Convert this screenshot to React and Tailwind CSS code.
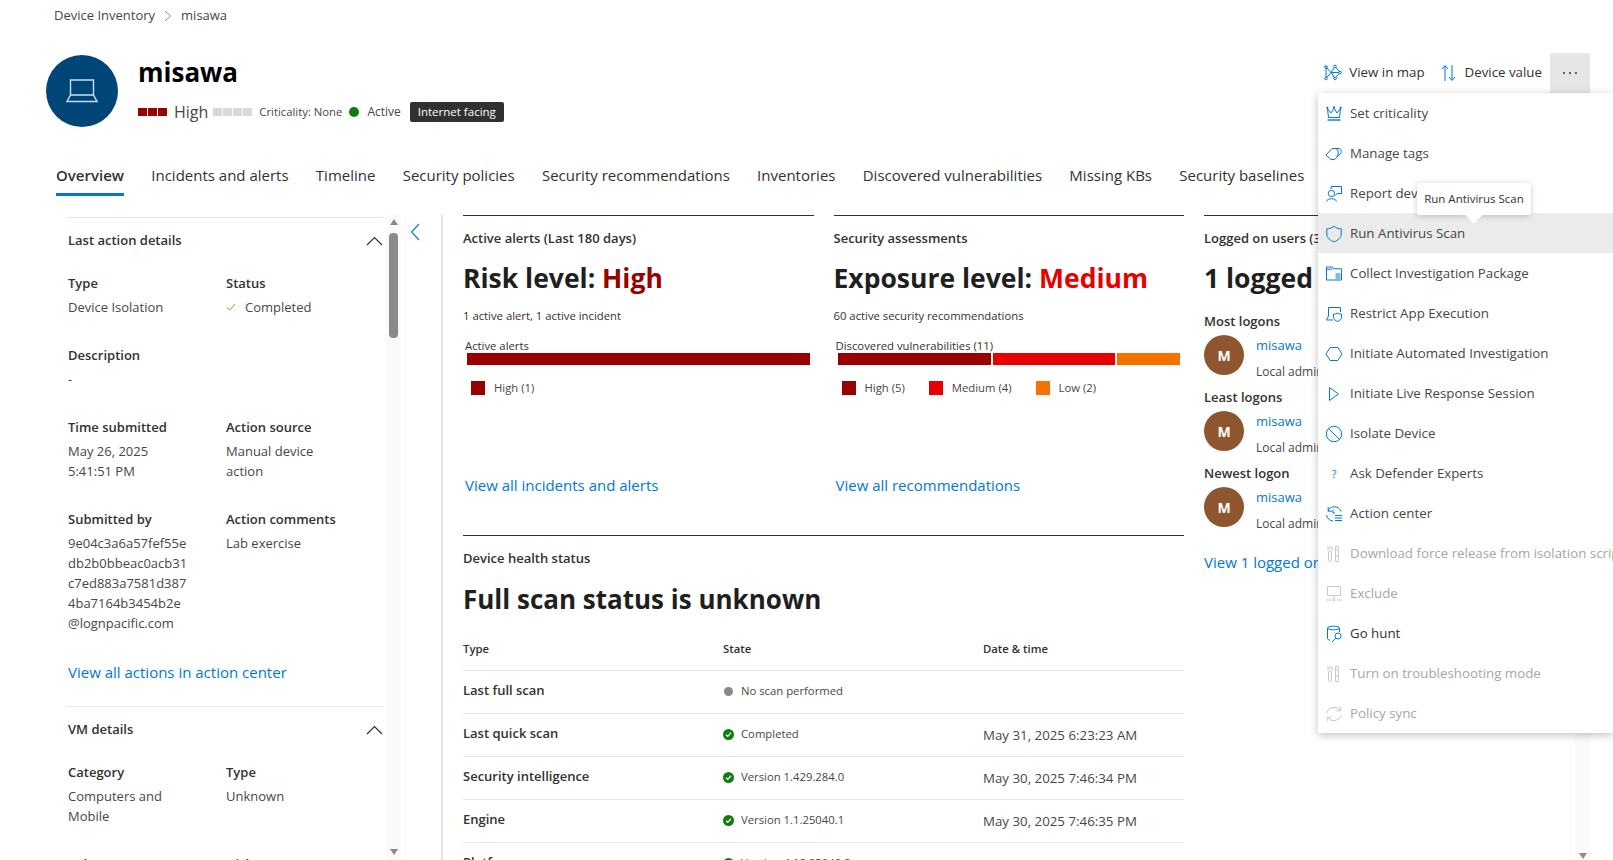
import React from "react";

const font = "font-['Open_Sans',sans-serif]";

// Icons are drawn by hand, they come from the Fluent set and lucide has no match
const Icon = ({ children, className = "text-[#0078d4]", size = 18 }) => (
  <svg
    width={size}
    height={size}
    viewBox="0 0 18 18"
    fill="none"
    stroke="currentColor"
    strokeWidth="1"
    className={`shrink-0 ${className}`}
  >
    {children}
  </svg>
);

const icons = {
  crown: (
    <>
      <path d="M2.5 3.5 L3.5 12.5 H14.5 L15.5 3.5 L12 8 L9 3 L6 8 Z" />
      <path d="M2.5 15 H15.5" strokeWidth="1.4" />
      <circle cx="2.3" cy="2.8" r="1.1" fill="currentColor" stroke="none" />
      <circle cx="9" cy="2.3" r="1.1" fill="currentColor" stroke="none" />
      <circle cx="15.7" cy="2.8" r="1.1" fill="currentColor" stroke="none" />
    </>
  ),
  tag: (
    <>
      <path d="M1 10 L7 3.5 H14 C16.5 3.5 17 7 15 9 L9.5 14.5 H6 Z" />
      <path d="M11 3.5 C13.5 5 14 8.5 12 11.5" />
    </>
  ),
  report: (
    <>
      <circle cx="6.5" cy="8.5" r="3.2" />
      <path d="M1.5 16.5 C2 12.8 11 12.8 11.5 16.5" />
      <path d="M6 4 V1.5 H16.5 V8.5 H12 L10.5 10.5" />
    </>
  ),
  shield: <path d="M9 1.2 C11 3 13.5 3.8 16.2 3.8 V9 C16.2 12.8 12.5 15.6 9 16.9 C5.5 15.6 1.8 12.8 1.8 9 V3.8 C4.5 3.8 7 3 9 1.2 Z" />,
  folder: (
    <>
      <path d="M1.5 15 V2 H7 L8.5 3.8 H16.5 V15 Z" />
      <path d="M1.5 4.2 H7" />
      <path d="M10.5 9 H15.5 M10.5 11 H15.5 M10.5 13 H15.5" />
    </>
  ),
  restrict: (
    <>
      <path d="M3.5 11 V2.5 H15.5 V7" />
      <path d="M3.5 11 L1.5 15 H8" />
      <path d="M12.5 8 C13.5 8.8 15 9.2 16.5 9.2 V12 C16.5 14.2 14.5 15.7 12.5 16.5 C10.5 15.7 8.5 14.2 8.5 12 V9.2 C10 9.2 11.5 8.8 12.5 8 Z" />
    </>
  ),
  hexagon: <path d="M5.2 2.5 H12.8 L17 9 L12.8 15.5 H5.2 L1 9 Z" />,
  play: <path d="M4.5 2.5 L13.5 9 L4.5 15.5 Z" />,
  block: (
    <>
      <circle cx="9" cy="9" r="7.7" />
      <path d="M3.6 3.6 L14.4 14.4" />
    </>
  ),
  question: null,
  center: (
    <>
      <path d="M3 6 A7 7 0 0 1 16 6.5" />
      <path d="M3.2 2 V6.2 H7" />
      <path d="M1.5 10 A7.5 7.5 0 0 0 8 16" />
      <path d="M8 8 V5 M8 8 H10" />
      <path d="M10 10.5 H17 M10 13 H17 M10 15.5 H17" />
    </>
  ),
  tools: (
    <>
      <path d="M3 1.5 V5 C3 6 4 6.5 5 6.5 C6 6.5 7 6 7 5 V1.5 M5 1.5 V4 M3.5 7 V15.5 C3.5 16.8 6.5 16.8 6.5 15.5 V7" />
      <path d="M10.5 1.5 H13.5 V16.5 H10.5 Z M10.5 5 H13.5 M10.5 11 H13.5" />
    </>
  ),
  exclude: (
    <>
      <path d="M2.5 1.5 H15.5 V10.5 H2.5 Z" />
      <path d="M1 15 H6.5 M11.5 15 H17" />
      <path d="M7.5 13 L10.5 16.5 M10.5 13 L7.5 16.5" />
      <path d="M9 10.5 V13" />
    </>
  ),
  hunt: (
    <>
      <ellipse cx="8.5" cy="3" rx="6" ry="1.8" />
      <path d="M2.5 3 V13.5 C2.5 14.5 4 15 5 15.2 M14.5 3 V7" />
      <circle cx="13" cy="11" r="3" />
      <path d="M10.8 13.2 L7 17" />
    </>
  ),
  sync: (
    <>
      <path d="M1.5 8 A8 8 0 0 1 15.5 5.5" />
      <path d="M16.5 10 A8 8 0 0 1 2.5 12.5" />
      <path d="M15.8 1.5 V5.8 H11.5" />
      <path d="M2.2 16.5 V12.2 H6.5" />
    </>
  ),
};

const menuItems = [
  { label: "Set criticality", icon: "crown" },
  { label: "Manage tags", icon: "tag" },
  { label: "Report device inaccuracy", icon: "report" },
  { label: "Run Antivirus Scan", icon: "shield", active: true },
  { label: "Collect Investigation Package", icon: "folder" },
  { label: "Restrict App Execution", icon: "restrict" },
  { label: "Initiate Automated Investigation", icon: "hexagon" },
  { label: "Initiate Live Response Session", icon: "play" },
  { label: "Isolate Device", icon: "block" },
  { label: "Ask Defender Experts", icon: "question" },
  { label: "Action center", icon: "center" },
  { label: "Download force release from isolation script", icon: "tools", disabled: true },
  { label: "Exclude", icon: "exclude", disabled: true },
  { label: "Go hunt", icon: "hunt", dark: true },
  { label: "Turn on troubleshooting mode", icon: "tools", disabled: true },
  { label: "Policy sync", icon: "sync", disabled: true },
];

const tabs = [
  "Overview",
  "Incidents and alerts",
  "Timeline",
  "Security policies",
  "Security recommendations",
  "Inventories",
  "Discovered vulnerabilities",
  "Missing KBs",
  "Security baselines",
];

const scans = [
  { type: "Last full scan", state: "No scan performed", date: "", ok: false },
  { type: "Last quick scan", state: "Completed", date: "May 31, 2025 6:23:23 AM", ok: true },
  { type: "Security intelligence", state: "Version 1.429.284.0", date: "May 30, 2025 7:46:34 PM", ok: true },
  { type: "Engine", state: "Version 1.1.25040.1", date: "May 30, 2025 7:46:35 PM", ok: true },
  { type: "Platform", state: "Version 4.18.25040.2", date: "May 31, 2025 6:24:45 PM", ok: true },
];

const Field = ({ label, children, className = "" }) => (
  <div className={className}>
    <div className="text-[13px] leading-5 font-semibold text-[#323130]">{label}</div>
    <div className="mt-1 text-[13px] leading-5 text-[#484644]">{children}</div>
  </div>
);

const ChevronUp = () => (
  <svg width="17" height="10" viewBox="0 0 17 10" fill="none" stroke="#323130" strokeWidth="1.2">
    <path d="M1 9 L8.5 1.5 L16 9" />
  </svg>
);

const Sidebar = () => (
  <div className="relative w-[334px] shrink-0 h-[645px] overflow-hidden">
    <div className="w-[316px] border-t border-[#e5e5e5] h-[2px] mt-[2px]" />
    <div className="w-[315px] ml-[1px]">
      <div className="flex items-center justify-between mt-[12px] h-5">
        <span className="text-[13px] font-semibold text-[#323130]">Last action details</span>
        <ChevronUp />
      </div>
      <div className="grid grid-cols-[158px_1fr] mt-[22px]">
        <Field label="Type">Device Isolation</Field>
        <Field label="Status">
          <span className="flex items-center gap-[9px]">
            <svg width="10" height="10" viewBox="0 0 10 10" fill="none" stroke="#6bb700" strokeWidth="1">
              <path d="M1 5.5 L3.8 8 L9 2" />
            </svg>
            Completed
          </span>
        </Field>
      </div>
      <Field label="Description" className="mt-[28px]">-</Field>
      <div className="grid grid-cols-[158px_1fr] mt-[28px]">
        <Field label="Time submitted">
          May 26, 2025
          <br />
          5:41:51 PM
        </Field>
        <Field label="Action source">
          Manual device
          <br />
          action
        </Field>
      </div>
      <div className="grid grid-cols-[158px_1fr] mt-[28px]">
        <Field label="Submitted by">
          9e04c3a6a57fef55e
          <br />
          db2b0bbeac0acb31
          <br />
          c7ed883a7581d387
          <br />
          4ba7164b3454b2e
          <br />
          @lognpacific.com
        </Field>
        <Field label="Action comments">Lab exercise</Field>
      </div>
      <a className="block mt-[29px] text-[15px] leading-5 text-[#0078d4]">View all actions in action center</a>
      <div className="border-t border-[#e5e5e5] -ml-[1px] mt-[24px]" />
      <div className="flex items-center justify-between mt-[13px] h-5">
        <span className="text-[13px] font-semibold text-[#323130]">VM details</span>
        <ChevronUp />
      </div>
      <div className="grid grid-cols-[158px_1fr] mt-[22px]">
        <Field label="Category">
          Computers and
          <br />
          Mobile
        </Field>
        <Field label="Type">Unknown</Field>
      </div>
      <div className="grid grid-cols-[158px_1fr] mt-[28px]">
        <Field label="Subtype">Unknown</Field>
        <Field label="Disks">Unknown</Field>
      </div>
    </div>
    {/* sidebar scrollbar */}
    <div className="absolute right-0 top-0 bottom-0 w-[15px] bg-[#fafafa] flex flex-col items-center">
      <div className="mt-[4px] border-x-[4.5px] border-x-transparent border-b-[6px] border-b-[#8a8a8a]" />
      <div className="mt-[8px] w-[9px] h-[105px] rounded-[4px] bg-[#8a8a8a]" />
      <div className="mt-auto mb-[5px] border-x-[4.5px] border-x-transparent border-t-[6px] border-t-[#8a8a8a]" />
    </div>
  </div>
);

const Swatch = ({ color, label }) => (
  <span className="flex items-center gap-[9px] text-[11.3px] text-[#484644]">
    <span className={`w-[14px] h-[14px] ${color}`} />
    {label}
  </span>
);

const CardHead = ({ label }) => (
  <div className="text-[13px] leading-5 font-semibold text-[#323130] mt-[12px]">{label}</div>
);

const Logon = ({ title }) => (
  <div>
    <div className="text-[13px] leading-5 font-semibold text-[#323130]">{title}</div>
    <div className="flex gap-[12px] mt-[4px] h-10 whitespace-nowrap">
      <div className="w-10 h-10 rounded-full bg-[#8e562e] text-white flex items-center justify-center text-[14px] font-bold shrink-0">
        M
      </div>
      <div>
        <div className="text-[13px] leading-5 text-[#0078d4]">misawa</div>
        <div className="text-[12px] leading-4 text-[#484644] mt-[9px]">Local admin</div>
      </div>
    </div>
  </div>
);

const StateDot = ({ ok }) =>
  ok ? (
    <svg width="11" height="11" viewBox="0 0 11 11" className="shrink-0">
      <circle cx="5.5" cy="5.5" r="5.5" fill="#107c10" />
      <path d="M3 5.7 L4.8 7.4 L8 3.8" fill="none" stroke="white" strokeWidth="1.3" />
    </svg>
  ) : (
    <span className="w-[9px] h-[9px] mx-[1px] rounded-full bg-[#8a8886] shrink-0" />
  );

export default function App() {
  return (
    <div className={`relative h-[860px] overflow-hidden bg-white ${font}`}>
      {/* Breadcrumb */}
      <div className="flex items-center h-[16px] pt-[8px] box-content ml-[54px] text-[13px] text-[#484644]">
        <span>Device Inventory</span>
        <svg width="8" height="12" viewBox="0 0 8 12" fill="none" stroke="#8a8886" className="mx-[9px]">
          <path d="M1 1 L6.5 6 L1 11" />
        </svg>
        <span>misawa</span>
      </div>

      {/* Device header */}
      <div className="flex justify-between mt-[29px] pr-[23px]">
        <div className="flex ml-[46px] mt-[2px]">
          <div className="w-[72px] h-[72px] rounded-full bg-[#004578] flex items-center justify-center">
            <svg width="34" height="26" viewBox="0 0 34 26" fill="none" stroke="#c7e0f4" strokeWidth="1.4">
              <path d="M5.5 17 V2 H28.5 V17" />
              <path d="M5.5 17 H28.5 L32 23.5 H2 Z" />
            </svg>
          </div>
          <div className="ml-[20px]">
            <div className="text-[26px] leading-9 font-bold text-black -mt-[1px]">misawa</div>
            <div className="flex items-center mt-[10px] h-[24px]">
              <span className="flex gap-[1px]">
                <i className="w-[9px] h-[8px] bg-[#990000]" />
                <i className="w-[9px] h-[8px] bg-[#990000]" />
                <i className="w-[9px] h-[8px] bg-[#990000]" />
              </span>
              <span className="ml-[7px] text-[16px] text-[#484644]">High</span>
              <span className="flex gap-[1px] ml-[5px]">
                <i className="w-[9px] h-[8px] bg-[#d9d9d9]" />
                <i className="w-[9px] h-[8px] bg-[#d9d9d9]" />
                <i className="w-[9px] h-[8px] bg-[#d9d9d9]" />
                <i className="w-[9px] h-[8px] bg-[#d9d9d9]" />
              </span>
              <span className="ml-[7px] text-[11.3px] text-[#484644]">Criticality: None</span>
              <span className="ml-[7px] w-[10px] h-[10px] rounded-full bg-[#107c10]" />
              <span className="ml-[8px] text-[12px] text-[#484644]">Active</span>
              <span className="ml-[9px] h-[20px] px-2 rounded-[2px] bg-[#323130] text-white text-[11.5px] leading-5">
                Internet facing
              </span>
            </div>
          </div>
        </div>
        <div className="flex items-center h-10 text-[13.3px] text-[#323130]">
          <svg width="18" height="18" viewBox="0 0 18 18" fill="none" stroke="#0078d4" className="mr-[7px]">
            <path d="M2 3 L7 8.5 L2 14.5 M7 8.5 L11 2.5 L16 8.5 L11 14.5 Z M7 8.5 H16 M2 3 V14.5" />
            <circle cx="2" cy="3" r="1.3" fill="white" />
            <circle cx="2" cy="14.5" r="1.3" fill="white" />
            <circle cx="11" cy="2.5" r="1.3" fill="white" />
            <circle cx="16" cy="8.5" r="1.3" fill="white" />
            <circle cx="11" cy="14.5" r="1.3" fill="white" />
          </svg>
          View in map
          <svg width="16" height="18" viewBox="0 0 16 18" fill="none" stroke="#0078d4" className="ml-[16px] mr-[8px]">
            <path d="M4 17 V2 M1 5 L4 1.5 L7 5" />
            <path d="M11 1 V16 M8 13 L11 16.5 L14 13" />
          </svg>
          Device value
          <div className="ml-[8px] w-10 h-10 bg-[#e6e6e6] flex items-center justify-center gap-[4px]">
            <i className="w-[2px] h-[2px] rounded-full bg-[#323130]" />
            <i className="w-[2px] h-[2px] rounded-full bg-[#323130]" />
            <i className="w-[2px] h-[2px] rounded-full bg-[#323130]" />
          </div>
        </div>
      </div>

      {/* Tabs */}
      <div className="flex gap-[27.25px] ml-[56px] mt-[37px] h-[32px] text-[15px] text-[#323130] whitespace-nowrap">
        {tabs.map((tab, i) => (
          <div key={tab} className={i === 0 ? "font-semibold border-b-[3px] border-[#0078d4]" : ""}>
            {tab}
          </div>
        ))}
      </div>

      {/* Body */}
      <div className="flex mt-[19px] ml-[67px]">
        <Sidebar />
        <div className="w-[42px] shrink-0 border-r-2 border-[#e1e1e1] pl-[9px] pt-[8px] h-[645px]">
          <svg width="10" height="18" viewBox="0 0 10 18" fill="none" stroke="#0078d4" strokeWidth="1.1">
            <path d="M9 1 L1.5 9 L9 17" />
          </svg>
        </div>

        <div className="ml-[20px] w-[721px] shrink-0">
          <div className="grid grid-cols-2 gap-x-[20px] h-[320px]">
            {/* Alerts */}
            <div className="border-t border-[#323130]">
              <CardHead label="Active alerts (Last 180 days)" />
              <div className="text-[26.5px] leading-9 font-bold text-[#201f1e] mt-[12px]">
                Risk level: <span className="text-[#990000]">High</span>
              </div>
              <div className="text-[11.3px] leading-4 text-[#323130] mt-[12px]">1 active alert, 1 active incident</div>
              <div className="text-[11.3px] leading-4 text-[#323130] mt-[14px] ml-[2px]">Active alerts</div>
              <div className="flex h-[12px] mx-[4px] -mt-[1px]">
                <div className="flex-1 bg-[#990000]" />
              </div>
              <div className="flex gap-4 ml-[8px] mt-[15px]">
                <Swatch color="bg-[#990000]" label="High (1)" />
              </div>
              <a className="block ml-[2px] mt-[78px] text-[15px] leading-5 text-[#0078d4]">
                View all incidents and alerts
              </a>
            </div>
            {/* Assessments */}
            <div className="border-t border-[#323130]">
              <CardHead label="Security assessments" />
              <div className="text-[26.5px] leading-9 font-bold text-[#201f1e] mt-[12px]">
                Exposure level: <span className="text-[#e60000]">Medium</span>
              </div>
              <div className="text-[11.3px] leading-4 text-[#323130] mt-[12px]">60 active security recommendations</div>
              <div className="text-[11.3px] leading-4 text-[#323130] mt-[14px] ml-[2px]">Discovered vulnerabilities (11)</div>
              <div className="flex gap-[2px] h-[12px] mx-[4px] -mt-[1px]">
                <div className="w-[153px] bg-[#990000]" />
                <div className="w-[122px] bg-[#e60000]" />
                <div className="flex-1 bg-[#f57200]" />
              </div>
              <div className="flex gap-[24px] ml-[8px] mt-[15px]">
                <Swatch color="bg-[#990000]" label="High (5)" />
                <Swatch color="bg-[#e60000]" label="Medium (4)" />
                <Swatch color="bg-[#f57200]" label="Low (2)" />
              </div>
              <a className="block ml-[2px] mt-[78px] text-[15px] leading-5 text-[#0078d4]">View all recommendations</a>
            </div>
          </div>

          {/* Health table */}
          <div className="border-t border-[#323130]">
            <CardHead label="Device health status" />
            <div className="text-[26px] leading-9 font-bold text-[#201f1e] mt-[13px]">Full scan status is unknown</div>
            <div className="grid grid-cols-[260px_260px_1fr] h-[43px] mt-[11px] items-center border-b border-[#e5e5e5] text-[11.3px] font-semibold text-[#323130]">
              <span>Type</span>
              <span>State</span>
              <span>Date &amp; time</span>
            </div>
            {scans.map((scan) => (
              <div key={scan.type} className="grid grid-cols-[260px_260px_1fr] h-[43px] pb-[2px] items-center border-b border-[#e5e5e5]">
                <span className="text-[13px] font-semibold text-[#323130]">{scan.type}</span>
                <span className="flex items-center gap-[7px] text-[11.3px] text-[#484644]">
                  <StateDot ok={scan.ok} />
                  {scan.state}
                </span>
                <span className="text-[13.3px] text-[#484644] mt-[3px]">{scan.date}</span>
              </div>
            ))}
          </div>
        </div>

        {/* Logged on users, mostly behind the menu */}
        <div className="ml-[20px] w-[340px] shrink-0">
          <div className="border-t border-[#323130]">
            <CardHead label="Logged on users (30 days)" />
            <div className="text-[26.5px] leading-9 font-bold text-[#201f1e] mt-[12px] whitespace-nowrap">1 logged on user</div>
            <div className="flex flex-col gap-[12px] mt-[15px]">
              <Logon title="Most logons" />
              <Logon title="Least logons" />
              <Logon title="Newest logon" />
            </div>
            <a className="block mt-[25px] text-[15px] leading-5 text-[#0078d4] whitespace-nowrap">View 1 logged on user</a>
          </div>
        </div>
      </div>

      {/* Page scrollbar, sits under the menu */}
      <div className="absolute right-[23px] top-[93px] bottom-0 w-[15px] bg-[#fafafa] flex flex-col items-center justify-end">
        <div className="mb-[1px] border-x-[4.5px] border-x-transparent border-t-[6px] border-t-[#8a8a8a]" />
      </div>

      {/* Overflow menu */}
      <div className="absolute left-[1318px] top-[93px] w-[295px] bg-white shadow-[0_2px_8px_rgba(0,0,0,0.25)] overflow-hidden whitespace-nowrap">
        {menuItems.map((item) => (
          <div
            key={item.label}
            className={`flex items-center h-10 pl-[7px] pt-[2px] text-[13.3px] ${item.active ? "bg-[#ebebeb]" : ""} ${
              item.disabled ? "text-[#a6a6a6]" : item.dark ? "text-[#323130]" : "text-[#484644]"
            }`}
          >
            {item.icon === "question" ? (
              <span className="w-[18px] text-center text-[11px] text-[#0078d4] shrink-0">?</span>
            ) : (
              <Icon className={item.disabled ? "text-[#c8c8c8]" : "text-[#0078d4]"}>{icons[item.icon]}</Icon>
            )}
            <span className="ml-[7px]">{item.label}</span>
          </div>
        ))}
      </div>

      {/* Tooltip */}
      <div className="absolute left-[1417px] top-[183px] w-[114px] h-[32px] rounded-[2px] bg-white shadow-[0_1px_6px_rgba(0,0,0,0.2)] flex items-center justify-center text-[11.5px] text-[#323130] whitespace-nowrap">
        Run Antivirus Scan
        <div className="absolute left-1/2 -bottom-[6px] -ml-[6px] w-3 h-3 rotate-45 bg-white" />
      </div>
    </div>
  );
}
